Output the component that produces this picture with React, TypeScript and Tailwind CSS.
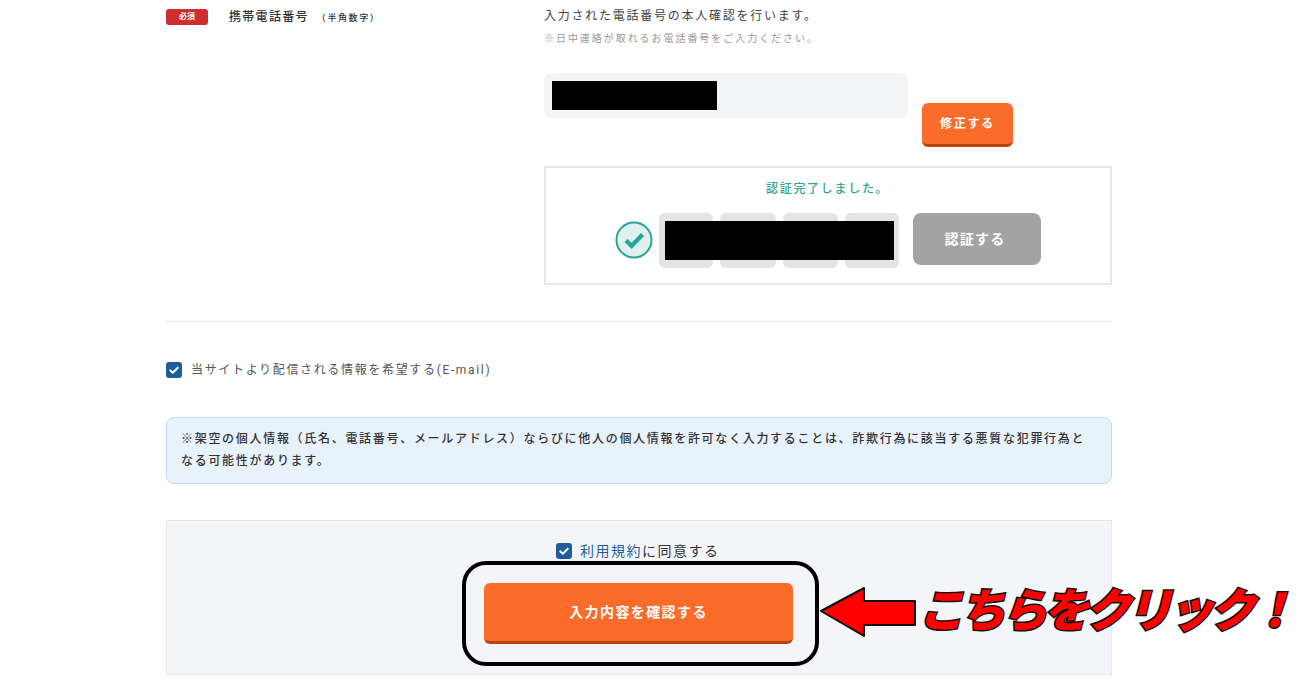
function CheckBox() {
  return (
    <span className="flex h-4 w-4 shrink-0 items-center justify-center rounded-[3px] bg-[#1f5f99]">
      <svg viewBox="0 0 16 16" className="h-3 w-3" fill="none" stroke="#fff" strokeWidth="2.6" strokeLinecap="round" strokeLinejoin="round">
        <path d="M3 8.5l3.4 3.2L13 5" />
      </svg>
    </span>
  );
}

function CodeBox({ width }: { width: string }) {
  return <div className={`h-[55px] rounded-md bg-[#e4e4e4] ${width}`}></div>;
}

export default function App() {
  return (
    <div className="relative h-[700px] w-[1300px] overflow-hidden bg-white font-['Roboto','Noto_Sans_CJK_JP',sans-serif] text-[#333]">
      <div className="ml-[166px] w-[946px]">
        <section className="flex pt-[9px]">
          <div className="flex w-[378px] items-start">
            <span className="flex h-4 w-[42px] items-center justify-center rounded-[3px] bg-[#cf2e2e] text-[8px] leading-none font-bold text-white">
              必須
            </span>
            <span className="ml-[21px] text-xs leading-4 font-medium tracking-[1.3px]">
              携帯電話番号
              <span className="ml-2 text-[9px] tracking-[1.6px]">（半角数字）</span>
            </span>
          </div>
          <div className="w-[568px]">
            <p className="text-xs leading-[14px] tracking-[1.75px] text-[#444]">入力された電話番号の本人確認を行います。</p>
            <p className="mt-[10px] text-[10px] leading-3 tracking-[1.95px] text-[#999]">※日中連絡が取れるお電話番号をご入力ください。</p>
            <div className="mt-[28px] flex items-start">
              <div className="h-[45px] w-[364px] rounded-lg bg-[#f4f5f7] py-2 pl-2">
                <div className="h-[29px] w-[165px] bg-black"></div>
              </div>
              <button className="mt-[30px] ml-[14px] h-[44px] w-[91px] rounded-md border-b-[3px] border-[#b9440f] bg-[#fb6b2a] text-xs font-bold tracking-[1.75px] text-white">
                修正する
              </button>
            </div>
            <div className="mt-[19px] h-[119px] border-2 border-[#e6e8eb] pt-[12px]">
              <p className="pl-[220px] text-xs leading-[18px] font-medium tracking-[1.7px] text-[#2fa395]">認証完了しました。</p>
              <div className="mt-[15px] flex items-start pl-[69px]">
                <svg viewBox="0 0 38 38" className="mt-[8px] h-[38px] w-[38px] shrink-0">
                  <circle cx="19" cy="19" r="17.5" fill="#dff1ee" stroke="#26a796" strokeWidth="2" />
                  <path d="M11 19.5l5.6 5.4L27.5 13.5" fill="none" stroke="#26a796" strokeWidth="4.4" />
                </svg>
                <div className="relative ml-[6px] flex gap-[7px]">
                  <CodeBox width="w-[54px]" />
                  <CodeBox width="w-[56px]" />
                  <CodeBox width="w-[55px]" />
                  <CodeBox width="w-[54px]" />
                  <div className="absolute top-2 left-[6px] h-[39px] w-[229px] bg-black"></div>
                </div>
                <button className="ml-[14px] h-[52px] w-[128px] rounded-lg bg-[#a3a3a3] pr-1 text-sm font-bold tracking-[1.3px] text-white">
                  認証する
                </button>
              </div>
            </div>
          </div>
        </section>

        <hr className="mt-[36px] border-[#e9ebee]" />

        <label className="mt-[40px] flex items-center gap-[9px] text-xs tracking-[1.66px] text-[#555]">
          <CheckBox />
          当サイトより配信される情報を希望する(E-mail)
        </label>

        <div className="mt-[39px] h-[67px] rounded-lg border border-[#c8dcec] bg-[#e8f2fb] px-[14px] py-[10px] text-xs leading-[22px] font-medium tracking-[1.7px] text-[#333]">
          ※架空の個人情報（氏名、電話番号、メールアドレス）ならびに他人の個人情報を許可なく入力することは、詐欺行為に該当する悪質な犯罪行為となる可能性があります。
        </div>

        <div className="relative mt-[36px] h-[155px] border border-[#e6e7ea] bg-[#f4f5f8] pt-[22px]">
          <label className="ml-[389px] flex items-center gap-2 text-sm leading-4 tracking-[1.5px] text-[#333]">
            <CheckBox />
            <span>
              <span className="text-[#1f5f99]">利用規約</span>に同意する
            </span>
          </label>
          <button className="mt-[24px] ml-[317px] h-[61px] w-[309px] rounded-md border-b-[3px] border-[#b9440f] bg-[#fb6b2a] text-sm font-bold tracking-[1.4px] text-white">
            入力内容を確認する
          </button>

          {/* annotation drawn over the screenshot */}
          <div className="absolute top-[40px] left-[295px] h-[105px] w-[357px] rounded-[24px] border-4 border-black"></div>
          <svg viewBox="0 0 98 52" className="absolute top-[65px] left-[652px] h-[52px] w-[98px]">
            <path d="M2 25L45 2V15H96V39H45V50Z" fill="#f00" stroke="#111" strokeWidth="2" strokeLinejoin="round" />
          </svg>
          <span className="absolute top-[55px] left-[751px] text-[46px] leading-[70px] font-black tracking-[-4.4px] whitespace-nowrap text-[#f00] italic [-webkit-text-stroke:3px_#111] [paint-order:stroke_fill]">
            こちらをクリック！
          </span>
        </div>
      </div>
    </div>
  );
}
